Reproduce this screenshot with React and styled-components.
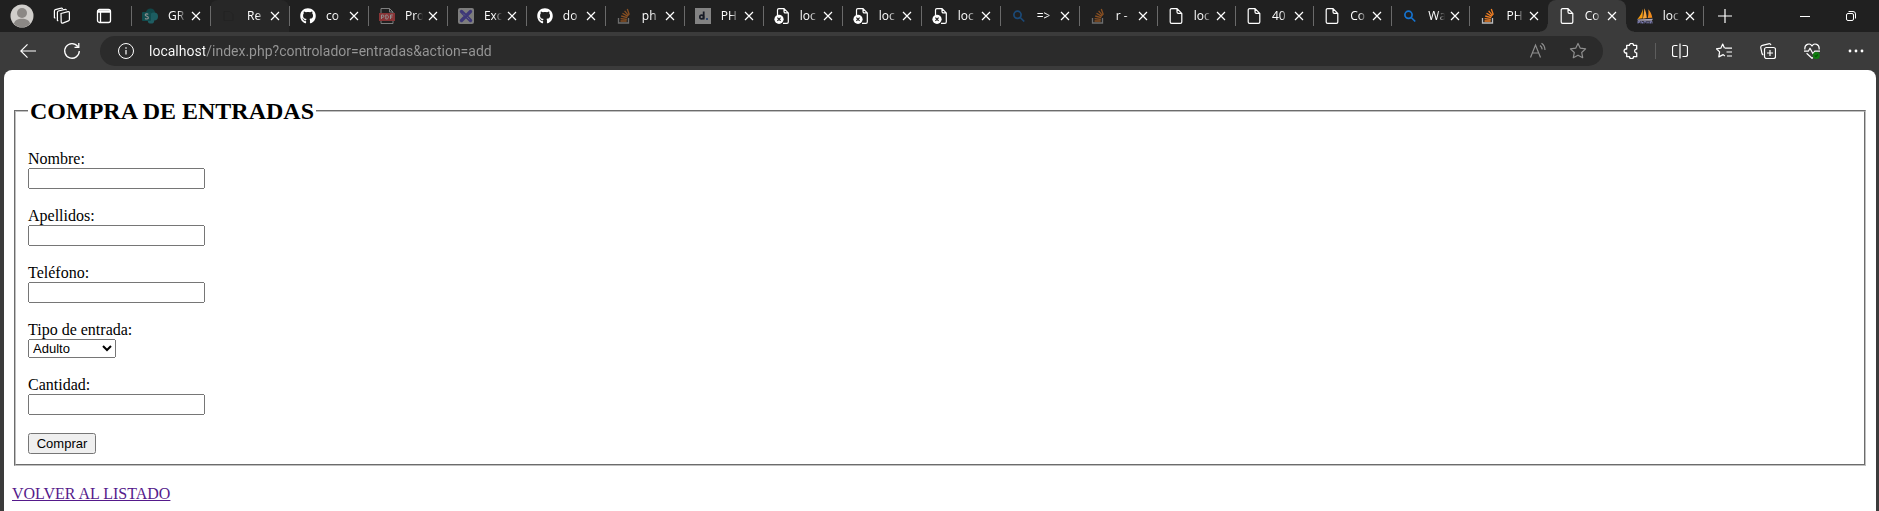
import React from "react";
import styled, { createGlobalStyle, css } from "styled-components";
import { FaGithub } from "react-icons/fa";

const GlobalStyle = createGlobalStyle`
  * { box-sizing: border-box; }
  body { margin: 0; background: #3b3b3b; }
`;

const uiFont = `"Open Sans", "Noto Sans", sans-serif`;

const Browser = styled.div`
  display: flex;
  flex-direction: column;
  min-height: 100vh;
  background: #3b3b3b;
`;

const TitleBar = styled.header`
  display: flex;
  align-items: stretch;
  height: 32px;
  background: #202020;
  color: #fff;
  font: 12px/16px ${uiFont};
`;

const IconButton = styled.button`
  display: flex;
  align-items: center;
  justify-content: center;
  flex: none;
  width: ${(p) => p.$width || 36}px;
  padding: 0;
  border: 0;
  background: none;
  color: ${(p) => (p.$muted ? "#8f8f8f" : "#fff")};
`;

const TitleTools = styled.div`
  display: flex;
  flex: none;
  gap: 6px;
  padding-right: 9px;
`;

const ProfileButton = styled(IconButton)`
  margin-right: -6px;
`;

const TabStrip = styled.nav`
  display: flex;
  flex: 1;
  min-width: 0;
`;

const Tab = styled.div`
  position: relative;
  display: flex;
  align-items: center;
  flex: ${(p) => p.$share} 1 0;
  min-width: 0;
  padding: 0 6px 0 11px;
  ${(p) =>
    p.$hover &&
    css`
      background: #272727;
      border-radius: 8px 8px 0 0;
    `}
  ${(p) =>
    p.$active &&
    css`
      background: #3b3b3b;
      border-radius: 8px 8px 0 0;
      &::before,
      &::after {
        content: "";
        position: absolute;
        bottom: 0;
        width: 8px;
        height: 8px;
      }
      &::before {
        right: 100%;
        background: radial-gradient(circle at 0 0, transparent 7px, #3b3b3b 8px);
      }
      &::after {
        left: 100%;
        background: radial-gradient(circle at 100% 0, transparent 7px, #3b3b3b 8px);
      }
    `}
  ${(p) =>
    p.$divider &&
    css`
      &::before {
        content: "";
        position: absolute;
        left: 0;
        top: 6px;
        height: 20px;
        width: 1px;
        background: #6a6a6a;
      }
    `}
  &:last-child::after {
    content: "";
    position: absolute;
    right: 0;
    top: 6px;
    height: 20px;
    width: 1px;
    background: #6a6a6a;
  }
`;

const TabTitle = styled.button`
  display: flex;
  align-items: center;
  gap: 10px;
  flex: 1;
  min-width: 0;
  height: 24px;
  padding: 0;
  border: 0;
  background: none;
  color: #fff;
  font: inherit;
  text-align: left;
  svg {
    flex: none;
    opacity: ${(p) => (p.$asleep ? 0.5 : 1)};
  }
`;

const TabText = styled.span`
  flex: 1;
  min-width: 0;
  height: 16px;
  overflow: hidden;
  white-space: nowrap;
  mask-image: linear-gradient(to right, #000 calc(100% - 8px), transparent);
`;

const CloseButton = styled(IconButton)`
  height: 16px;
  margin-left: 2px;
`;

const WindowControls = styled.div`
  display: flex;
  flex: none;
  padding: 0 5px 0 36px;
`;

const Toolbar = styled.div`
  display: flex;
  align-items: center;
  height: 38px;
  padding: 0 5px 0 10px;
  gap: 8px;
`;

const AddressBar = styled.form`
  display: flex;
  align-items: center;
  flex: 1;
  min-width: 0;
  height: 30px;
  margin: 0 2px;
  padding: 0 9px 0 18px;
  gap: 8px;
  border-radius: 15px;
  background: #2b2b2b;
  color: #fff;
`;

const AddressInput = styled.input`
  flex: 1;
  min-width: 0;
  height: 24px;
  margin-left: 7px;
  padding: 0;
  border: 0;
  outline: 0;
  font: 14px/24px Roboto, ${uiFont};
  color: transparent;
  background: linear-gradient(to right, #fff 56px, #979797 56px);
  background-clip: text;
`;

const ToolDivider = styled.span`
  width: 1px;
  height: 16px;
  margin: 0 -2px;
  background: #5d5d5d;
`;

const Page = styled.main`
  flex: 1;
  margin: 0 3px 0 4px;
  padding: 8px;
  border-radius: 8px 8px 0 0;
  background: #fff;
  color: #000;
  font: 16px/18px "Liberation Serif", "Times New Roman", serif;
`;

const Fieldset = styled.fieldset`
  display: block;
  margin: 0 2px 19px;
  padding: 6px 12px 10px;
  border: 2px groove #c0c0c0;
`;

const Legend = styled.legend`
  padding: 0 2px;
`;

const Heading = styled.h2`
  margin: 20px 0;
  font-size: 24px;
  line-height: 26px;
`;

const Fields = styled.div`
  display: flex;
  flex-direction: column;
  align-items: flex-start;
  gap: 18px;
`;

const Field = styled.div`
  display: flex;
  flex-direction: column;
  align-items: flex-start;
`;

const controlFont = css`
  margin: 0;
  font-family: "Liberation Sans", Arial, sans-serif;
  font-size: 13px;
`;

const TextInput = styled.input`
  ${controlFont}
  width: 177px;
  height: 21px;
`;

const Select = styled.select`
  ${controlFont}
  width: 88px;
  height: 19px;
`;

const SubmitButton = styled.button`
  ${controlFont}
  width: 68px;
  height: 21px;
  padding: 1px 6px;
`;

const BackLink = styled.a`
  color: #551a8b;
  text-decoration: underline;
`;

const Svg = ({ size = 16, children, ...rest }) => (
  <svg width={size} height={size} viewBox={`0 0 ${size} ${size}`} fill="none" stroke="currentColor" aria-hidden="true" {...rest}>
    {children}
  </svg>
);

const SharePoint = () => (
  <Svg stroke="none">
    <circle cx="8.5" cy="5" r="4.6" fill="#036c70" />
    <circle cx="12" cy="8.6" r="4" fill="#1a9ba1" />
    <circle cx="9" cy="12.4" r="3.2" fill="#1f9aa3" />
    <rect x="0" y="4" width="9" height="9" rx="1" fill="#03787c" />
    <path d="M6.3 6.3C5.6 5.7 3.2 5.6 3.2 7.1c0 1.5 3.2 1 3.2 2.6 0 1.4-2.4 1.5-3.4.8" stroke="#fff" strokeWidth="1.1" />
  </Svg>
);

const Faint = () => (
  <Svg stroke="#232323">
    <path d="M3 3.5h6l3 3v6H3z" />
  </Svg>
);

const GitHub = () => <FaGithub size={16} color="#fff" aria-hidden="true" />;

const Pdf = () => (
  <Svg stroke="none">
    <path d="M2 .5h8.5L14 4v11.5H2z" stroke="#ddd" strokeWidth="1" fill="#222" />
    <path d="M10.5.5V4H14" stroke="#ddd" />
    <rect x="0" y="5" width="16" height="8" fill="#f0484d" />
    <path d="M2.5 11V7h1.2a1.2 1.2 0 0 1 0 2.4H2.5M6.8 7v4h.8c2.4 0 2.4-4 0-4zM11.5 11V7h2.3M11.5 9h1.9" stroke="#fff" />
  </Svg>
);

const CrossTool = () => (
  <Svg stroke="none">
    <rect width="16" height="16" rx="2" fill="#d9d9d9" />
    <path d="M3.5 3.5l9 9M12.5 3.5l-9 9" stroke="#5a4fcf" strokeWidth="3.4" strokeLinecap="round" />
    <path d="M5 5.5l2 2M9 9l2.500 2.500" stroke="#a39ce8" strokeWidth="1" />
  </Svg>
);

const StackOverflow = () => (
  <Svg>
    <path d="M2.500 10v5h10v-5" stroke="#bcbbbb" strokeWidth="1.300" />
    <path d="M4.500 13h6.200M4.600 10.700l6.200.6M5.200 8l6 1.700M6.500 5.200l5.400 3.200M8.600 2.800l4 4.800M11.300 1l2 5.800" stroke="#f48024" strokeWidth="1.300" />
  </Svg>
);

const LetterD = () => (
  <Svg stroke="none">
    <rect width="16" height="16" fill="#e6e6e6" />
    <path d="M8.700 3.500v8" stroke="#10182c" strokeWidth="1.800" />
    <circle cx="6.700" cy="9" r="1.900" stroke="#10182c" strokeWidth="1.600" />
    <rect x="11" y="10" width="2" height="2" fill="#3d6fc0" />
  </Svg>
);

const Page16 = () => (
  <Svg strokeWidth="1.200">
    <path d="M9 .6H3.600a1.400 1.400 0 0 0-1.400 1.400v12c0 .8.600 1.400 1.400 1.400h8.800c.8 0 1.400-.6 1.400-1.400V5.400zM9 .6v3.400c0 .8.600 1.400 1.400 1.400h3.400" />
  </Svg>
);

const BrokenPage = () => (
  <Svg strokeWidth="1.200">
    <path d="M3.500 7V2c0-.8.600-1.400 1.400-1.400H10l4.300 4.300V14c0 .8-.6 1.400-1.400 1.400H9M10 .6v3c0 .7.600 1.300 1.300 1.300h3" />
    <circle cx="5" cy="11.300" r="4.600" fill="#fff" stroke="none" />
    <path d="M3.400 9.700l3.200 3.200M6.600 9.700l-3.200 3.200" stroke="#202020" />
  </Svg>
);

const Search = () => (
  <Svg stroke="#1673cf" strokeWidth="1.700">
    <circle cx="6.500" cy="6.800" r="3.600" />
    <path d="M9.200 9.500l4 4" />
  </Svg>
);

const Sails = () => (
  <Svg stroke="none">
    <path d="M6 .8C5 4 3.600 8 .5 11l5-.8z" fill="#f89c0e" />
    <path d="M7.300.2c-.2 4-.6 7-1.500 10.500l4-.6C9.500 6 8.800 3 7.300.2z" fill="#f6a33b" />
    <path d="M11.300 1.300c.3 3.500.2 6-.6 8.800l4.600-.4c-.5-3.500-2-6.200-4-8.400z" fill="#f08a1c" />
    <path d="M0 11.500l16-.7-1.200 2H1z" fill="#aaa5b5" />
    <path d="M1 15.500v-2.400h1.500v1.300H1M4 12.700v2.800M4 14h1.500v1.500M7 15.500v-2.200h1.500v1.200M10 15.500v-2l1 1 1-1v2M13.500 15.500v-2.200h1.500v2.200" stroke="#8585bd" strokeWidth=".9" />
  </Svg>
);

const CloseIcon = () => (
  <Svg size={10} strokeWidth="1.200">
    <path d="M1 1l8 8M9 1L1 9" />
  </Svg>
);

const tabs = [
  { text: "GR", icon: SharePoint, asleep: true },
  { text: "Re", icon: Faint, hover: true },
  { text: "co", icon: GitHub },
  { text: "Pro", icon: Pdf, asleep: true },
  { text: "Exc", icon: CrossTool, asleep: true },
  { text: "do", icon: GitHub },
  { text: "ph", icon: StackOverflow, asleep: true },
  { text: "PH", icon: LetterD, asleep: true },
  { text: "loc", icon: BrokenPage },
  { text: "loc", icon: BrokenPage },
  { text: "loc", icon: BrokenPage },
  { text: "=>", icon: Search, asleep: true },
  { text: "r -", icon: StackOverflow, asleep: true },
  { text: "loc", icon: Page16 },
  { text: "40", icon: Page16 },
  { text: "Co", icon: Page16 },
  { text: "Wa", icon: Search },
  { text: "PH", icon: StackOverflow },
  { text: "Co", icon: Page16, active: true },
  { text: "loc", icon: Sails },
];

const BrowserTab = ({ tab, divider, share }) => {
  const Icon = tab.icon;
  return (
    <Tab $active={tab.active} $hover={tab.hover} $divider={divider} $share={share}>
      <TabTitle type="button" $asleep={tab.asleep}>
        <Icon />
        <TabText>{tab.text}</TabText>
      </TabTitle>
      <CloseButton type="button" $width={16} aria-label="Cerrar pestaña">
        <CloseIcon />
      </CloseButton>
    </Tab>
  );
};

const TextField = ({ id, label }) => (
  <Field>
    <label htmlFor={id}>{label}</label>
    <TextInput id={id} name={id} type="text" />
  </Field>
);

export default function App() {
  return (
    <Browser>
      <GlobalStyle />
      <TitleBar>
        <TitleTools>
          <ProfileButton type="button" $width={44} aria-label="Perfil">
            <Svg size={24} stroke="none">
              <circle cx="12" cy="12" r="11.500" fill="#d0cecb" />
              <circle cx="12" cy="9" r="5" fill="#8b8885" />
              <path d="M4 20c0-7 16-7 16 0a11.500 11.500 0 0 1-16 0z" fill="#8b8885" />
            </Svg>
          </ProfileButton>
          <IconButton type="button" aria-label="Áreas de trabajo">
            <Svg size={18} strokeWidth="1.200">
              <path d="M8 6.500l7-1.800c.8-.2 1.400.2 1.400 1v6.800c0 .7-.4 1.200-1 1.400l-5.600 2.200c-.9.300-1.600-.1-1.600-1zM5.300 13.900l-.9-.5V5.400c0-.7.400-1.200 1-1.400L12 2.300c.7-.2 1.300.2 1.300 1M2.400 11.300l-1-.6V4c0-.7.400-1.200 1-1.400l5.800-1.500c.7-.2 1.300.1 1.300.9" />
            </Svg>
          </IconButton>
          <IconButton type="button" aria-label="Menú de pestañas">
            <Svg strokeWidth="1.300">
              <rect x="1.500" y="1.500" width="13" height="13" rx="2" />
              <path d="M1.500 3.500h13" strokeWidth="2.500" />
              <path d="M4.500 4v10" />
            </Svg>
          </IconButton>
        </TitleTools>
        <TabStrip aria-label="Pestañas">
          {tabs.map((tab, i) => (
            <BrowserTab
              key={i}
              tab={tab}
              share={i < 12 ? 79 : 78}
              divider={!tab.active && !(i && tabs[i - 1].active)}
            />
          ))}
        </TabStrip>
        <IconButton type="button" $width={42} aria-label="Nueva pestaña">
          <Svg strokeWidth="1.200">
            <path d="M8 1v14M1 8h14" />
          </Svg>
        </IconButton>
        <WindowControls>
          <IconButton type="button" $width={46} aria-label="Minimizar">
            <Svg size={10}>
              <path d="M0 5.500h10" />
            </Svg>
          </IconButton>
          <IconButton type="button" $width={46} aria-label="Restaurar">
            <Svg size={10}>
              <rect x=".5" y="2.500" width="7" height="7" rx="1.500" />
              <path d="M2.500.5H7A2.500 2.500 0 0 1 9.500 3v4.500" />
            </Svg>
          </IconButton>
        </WindowControls>
      </TitleBar>

      <Toolbar>
        <IconButton type="button" aria-label="Atrás">
          <Svg strokeWidth="1.200">
            <path d="M16 8H.8M7.500 1.300L.8 8l6.700 6.700" />
          </Svg>
        </IconButton>
        <IconButton type="button" aria-label="Actualizar">
          <Svg size={18} strokeWidth="1.300">
            <path d="M16.300 9A7.300 7.300 0 1 1 14.800 4.500M15.800 1v4.300h-4.300" />
          </Svg>
        </IconButton>
        <AddressBar onSubmit={(e) => e.preventDefault()}>
          <Svg>
            <circle cx="8" cy="8" r="7.500" />
            <path d="M8 7v4.500M8 4.300v1.400" strokeWidth="1.200" />
          </Svg>
          <AddressInput
            type="text"
            aria-label="Dirección"
            defaultValue="localhost/index.php?controlador=entradas&action=add"
          />
          <IconButton type="button" $width={32} $muted aria-label="Leer en voz alta">
            <Svg size={18} strokeWidth="1.200">
              <path d="M1.500 15.500L6.500 3l5 12.500M3.300 11h6.400M11 3.500c1.300.9 2 2.200 2.200 3.900M12.500 1.300c2.200 1.500 3.400 3.800 3.500 6.700" />
            </Svg>
          </IconButton>
          <IconButton type="button" $width={32} $muted aria-label="Agregar a favoritos">
            <Svg size={18} strokeWidth="1.200" strokeLinejoin="round">
              <path d="M9 1.400l2.300 4.800 5.300.7-3.900 3.600 1 5.200L9 13.200l-4.700 2.500 1-5.200-3.900-3.600 5.300-.7z" />
            </Svg>
          </IconButton>
        </AddressBar>
        <IconButton type="button" aria-label="Extensiones">
          <Svg strokeWidth="1.300" strokeLinejoin="round">
            <path d="M3.700 2.300h2.800a2 2 0 0 1 4 0h3.200v3.800c-2.700-.3-2.700 4.100 0 3.800v3.800h-3.200a2 2 0 0 1-4 0H3.700V9.900a2 2 0 1 1 0-3.800z" />
          </Svg>
        </IconButton>
        <ToolDivider />
        <IconButton type="button" aria-label="Pantalla dividida">
          <Svg strokeWidth="1.200">
            <path d="M5.500 2.500h-3a2 2 0 0 0-2 2v7a2 2 0 0 0 2 2h3M10.500 2.500h3a2 2 0 0 1 2 2v7a2 2 0 0 1-2 2h-3M8 .5v15" />
          </Svg>
        </IconButton>
        <IconButton type="button" aria-label="Favoritos">
          <Svg strokeWidth="1.200" strokeLinejoin="round">
            <path d="M9 5.200h7M10.500 9h5.500M11 13h5M8.500 5.200L6.700 1 4.800 5.200.4 5.800l3.200 3.100-.8 5 4.400-2.300 1.600 1.400" />
          </Svg>
        </IconButton>
        <IconButton type="button" aria-label="Colecciones">
          <Svg strokeWidth="1.200">
            <path d="M3.300 11.900A2 2 0 0 1 2 10.500L.8 4.800A2 2 0 0 1 2.300 2.400L8.600.8c1.100-.3 2 .3 2.400 1.300" />
            <rect x="4.500" y="4.500" width="11" height="11" rx="2" />
            <path d="M10 7v6M7 10h6" />
          </Svg>
        </IconButton>
        <IconButton type="button" aria-label="Estado del navegador">
          <Svg strokeWidth="1.200" strokeLinejoin="round">
            <path d="M.9 6.500C.2 1.400 5.800-.8 8 3c2.200-3.800 7.800-1.600 7.100 3.500M0 8.200h4.300l1.700-3 3 5.500 1.600-2.500H16M2.600 10.300L8 15.300l1-1" />
            <circle cx="12.300" cy="12.500" r="3.500" fill="#107c10" stroke="none" />
            <path d="M10.700 12.500l1.200 1.200 2-2.200" stroke="#075307" />
          </Svg>
        </IconButton>
        <IconButton type="button" aria-label="Configuración y más">
          <Svg fill="currentColor" stroke="none">
            <circle cx="2" cy="8" r="1.400" />
            <circle cx="8" cy="8" r="1.400" />
            <circle cx="14" cy="8" r="1.400" />
          </Svg>
        </IconButton>
      </Toolbar>

      <Page>
        <form onSubmit={(e) => e.preventDefault()}>
          <Fieldset>
            <Legend>
              <Heading>COMPRA DE ENTRADAS</Heading>
            </Legend>
            <Fields>
              <TextField id="nombre" label="Nombre:" />
              <TextField id="apellidos" label="Apellidos:" />
              <TextField id="telefono" label="Teléfono:" />
              <Field>
                <label htmlFor="tipo">Tipo de entrada:</label>
                <Select id="tipo" name="tipo" defaultValue="adulto">
                  <option value="adulto">Adulto</option>
                </Select>
              </Field>
              <TextField id="cantidad" label="Cantidad:" />
              <SubmitButton type="submit">Comprar</SubmitButton>
            </Fields>
          </Fieldset>
        </form>
        <BackLink href="#listado">VOLVER AL LISTADO</BackLink>
      </Page>
    </Browser>
  );
}
